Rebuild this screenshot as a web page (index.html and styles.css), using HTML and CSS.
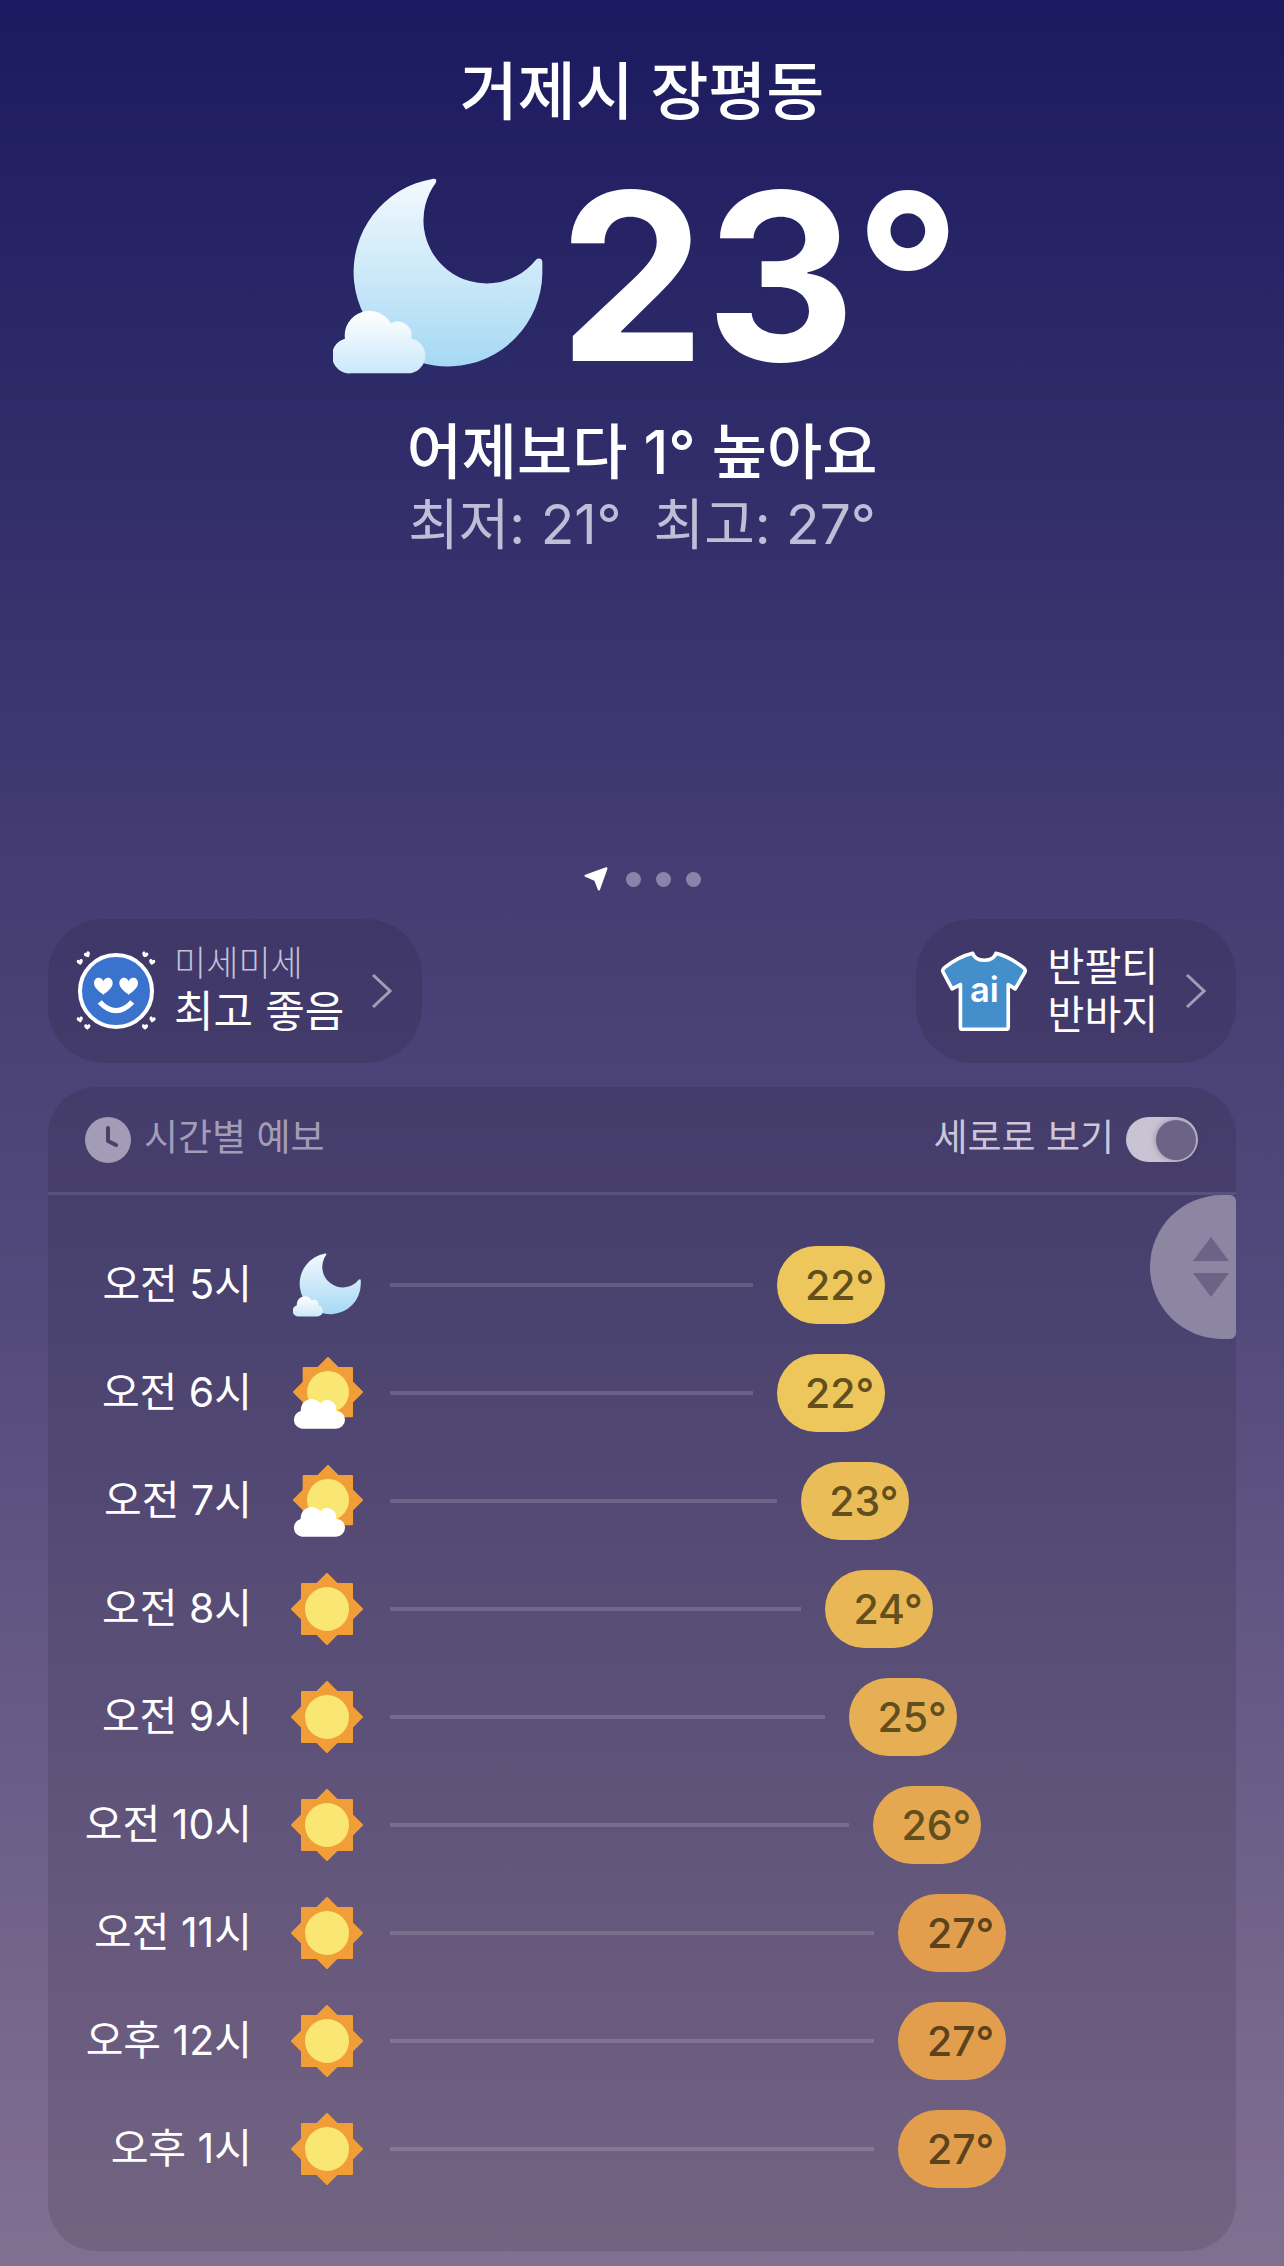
FILE: index.html
```html
<!DOCTYPE html>
<html lang="ko">
<head>
<meta charset="utf-8">
<meta name="viewport" content="width=device-width, initial-scale=1">
<title>거제시 장평동 날씨</title>
<link rel="stylesheet" href="styles.css">
</head>
<body>
<svg class="defs" aria-hidden="true">
  <defs>
    <linearGradient id="moonFill" x1="0" y1="0" x2="0" y2="1"><stop offset="0" stop-color="#f3f9fe"/><stop offset="1" stop-color="#a6d9f4"/></linearGradient>
    <linearGradient id="cloudFill" x1="0" y1="0" x2="0" y2="1"><stop offset="0" stop-color="#ffffff"/><stop offset="1" stop-color="#cbe8fa"/></linearGradient>
    <symbol id="moon" viewBox="98 87 632 588">
      <path fill="url(#moonFill)" d="M397 89C407 86 412 92 407 101A190 190 0 0 0 707 334C715 325 727 328 728 338V374A284 284 0 1 1 397 89Z"/>
      <path fill="url(#cloudFill)" d="M152 674A53 53 0 0 1 134 570A74 74 0 0 1 272 524A41 41 0 0 1 333 569A53 53 0 0 1 322 674Z"/>
    </symbol>
    <symbol id="sun" viewBox="0 0 72 72">
      <g fill="#f19e38" stroke="#f19e38" stroke-width="2" stroke-linejoin="round"><path d="M11 11H61V61H11Z"/><path d="M36 1L71 36L36 71L1 36Z"/></g>
      <circle cx="36" cy="36" r="22" fill="#fae673"/>
    </symbol>
    <symbol id="suncloud" viewBox="99 78 210 216">
      <g fill="#f19e38" stroke="#f19e38" stroke-width="6" stroke-linejoin="round"><path d="M131 111H276V256H131Z"/><path d="M204 81L306 183L204 285L102 183Z"/></g>
      <circle cx="204" cy="183" r="63" fill="#fae673"/>
      <path fill="#fff" d="M126 293A27 27 0 0 1 122 240A33 33 0 0 1 181 217A27 27 0 0 1 228 239A27 27 0 0 1 228 293Z"/>
    </symbol>
    <symbol id="chevron" viewBox="0 0 20 34"><path d="M1 1L18 17L1 33" fill="none" stroke="#a19cb8" stroke-width="3"/></symbol>
    <path id="heart" d="M0 26C-10 18 -28 7 -28 -8C-28 -28 -5 -30 0 -14C5 -30 28 -28 28 -8C28 7 10 18 0 26Z"/>
  </defs>
</svg>

<main class="app">
  <header class="hero">
    <h1 class="place">거제시 장평동</h1>
    <div class="now">
      <svg class="now-icon" role="img" aria-label="구름 조금, 밤"><use href="#moon"/></svg>
      <span class="now-temp">23°</span>
    </div>
    <p class="compare">어제보다 1° 높아요</p>
    <p class="range"><span>최저: 21°</span><span>최고: 27°</span></p>
  </header>

  <nav class="pager" aria-label="지역">
    <svg class="pager-here" viewBox="47 53 72 74" aria-hidden="true"><path d="M115 57L92 122L81 93L51 80Z" fill="#fff" stroke="#fff" stroke-width="7" stroke-linejoin="round"/></svg>
    <a class="dot" href="#1" aria-label="지역 1"></a>
    <a class="dot" href="#2" aria-label="지역 2"></a>
    <a class="dot" href="#3" aria-label="지역 3"></a>
  </nav>

  <div class="cards">
    <button class="card" type="button">
      <svg class="card-face" viewBox="111 300 240 240" aria-hidden="true">
        <circle cx="231" cy="420" r="108" fill="#3973ce" stroke="#fff" stroke-width="12"/>
        <g fill="#fff">
          <use href="#heart" transform="translate(193 405)"/><use href="#heart" transform="translate(269 405)"/>
          <use href="#heart" transform="translate(123 333) rotate(-14) scale(.33)"/><use href="#heart" transform="translate(145 311) rotate(-30) scale(.33)"/>
          <use href="#heart" transform="translate(318 311) rotate(20) scale(.33)"/><use href="#heart" transform="translate(339 333) rotate(14) scale(.33)"/>
          <use href="#heart" transform="translate(123 506) rotate(-14) scale(.33)"/><use href="#heart" transform="translate(145 528) scale(.33)"/>
          <use href="#heart" transform="translate(318 528) scale(.33)"/><use href="#heart" transform="translate(340 506) rotate(14) scale(.33)"/>
        </g>
        <path d="M182 453Q231 505 280 453" fill="none" stroke="#fff" stroke-width="16"/>
      </svg>
      <span class="card-text card-air"><span class="card-label">미세미세</span><span class="card-value">최고 좋음</span></span>
      <svg class="chevron" aria-hidden="true"><use href="#chevron"/></svg>
    </button>
    <button class="card card-wear" type="button">
      <svg class="card-shirt" viewBox="180 299 262 241" aria-hidden="true">
        <path d="M277 306C247 313 218 329 192 349Q184 355 188 363L215 413L240 400V529Q240 535 246 535H378Q384 535 384 529V400L405 413L434 363Q438 355 430 349C404 329 376 313 347 306C339 334 285 334 277 306Z" fill="#438ecb" stroke="#fff" stroke-width="11" stroke-linejoin="round"/>
        <text class="shirt-text" x="312" y="453" text-anchor="middle">ai</text>
      </svg>
      <span class="card-text"><span class="card-wear-line">반팔티</span><span class="card-wear-line">반바지</span></span>
      <svg class="chevron" aria-hidden="true"><use href="#chevron"/></svg>
    </button>
  </div>

  <section class="panel" aria-labelledby="hourly-title">
    <div class="panel-head">
      <svg class="clock" viewBox="0 0 46 46" aria-hidden="true"><circle cx="23" cy="23" r="23" fill="#a29cb6"/><path d="M23 11V24L31 28" fill="none" stroke="#494168" stroke-width="4" stroke-linecap="round" stroke-linejoin="round"/></svg>
      <h2 class="panel-title" id="hourly-title">시간별 예보</h2>
      <label class="switch-label" for="vertical">세로로 보기</label>
      <input class="switch" id="vertical" type="checkbox" role="switch" checked>
    </div>
    <div class="panel-body">
      <button class="handle" type="button" aria-label="스크롤">
        <svg class="handle-icon" viewBox="0 0 36 60" aria-hidden="true"><path d="M18 0L36 24H0ZM0 36H36L18 60Z" fill="#6b6487"/></svg>
      </button>
      <ol class="hours">
        <li class="hour"><span class="hour-time">오전 5시</span><svg class="hour-icon"><use href="#moon" x="2" y="4" width="68" height="64"/></svg><span class="track"><span class="bar" style="width:45%"></span><span class="pill t22">22°</span></span></li>
        <li class="hour"><span class="hour-time">오전 6시</span><svg class="hour-icon"><use href="#suncloud" x="1" width="72" height="72"/></svg><span class="track"><span class="bar" style="width:45%"></span><span class="pill t22">22°</span></span></li>
        <li class="hour"><span class="hour-time">오전 7시</span><svg class="hour-icon"><use href="#suncloud" x="1" width="72" height="72"/></svg><span class="track"><span class="bar" style="width:48%"></span><span class="pill t23">23°</span></span></li>
        <li class="hour"><span class="hour-time">오전 8시</span><svg class="hour-icon"><use href="#sun"/></svg><span class="track"><span class="bar" style="width:51%"></span><span class="pill t24">24°</span></span></li>
        <li class="hour"><span class="hour-time">오전 9시</span><svg class="hour-icon"><use href="#sun"/></svg><span class="track"><span class="bar" style="width:54%"></span><span class="pill t25">25°</span></span></li>
        <li class="hour"><span class="hour-time">오전 10시</span><svg class="hour-icon"><use href="#sun"/></svg><span class="track"><span class="bar" style="width:57%"></span><span class="pill t26">26°</span></span></li>
        <li class="hour"><span class="hour-time">오전 11시</span><svg class="hour-icon"><use href="#sun"/></svg><span class="track"><span class="bar" style="width:60%"></span><span class="pill t27">27°</span></span></li>
        <li class="hour"><span class="hour-time">오후 12시</span><svg class="hour-icon"><use href="#sun"/></svg><span class="track"><span class="bar" style="width:60%"></span><span class="pill t27">27°</span></span></li>
        <li class="hour"><span class="hour-time">오후 1시</span><svg class="hour-icon"><use href="#sun"/></svg><span class="track"><span class="bar" style="width:60%"></span><span class="pill t27">27°</span></span></li>
      </ol>
    </div>
  </section>
</main>
</body>
</html>
```
FILE: styles.css
```css
* { box-sizing: border-box; }

body {
  margin: 0;
  min-height: 100vh;
  color: #fff;
  font-family: Inter, "Noto Sans CJK KR", sans-serif;
  background: linear-gradient(#1c1a60 0%, #2e2b69 18%, #443c72 38%, #534a7c 58%, #7a698f 92%, #807090 100%);
}

h1, h2, p, ol { margin: 0; padding: 0; font-weight: 400; }
button { border: 0; color: inherit; font: inherit; cursor: pointer; }
svg { display: block; flex: none; }
.defs { position: absolute; width: 0; height: 0; }

.app { padding: 51px 48px 16px; }

/* Current conditions */
.hero { text-align: center; }
.place { font-size: 63px; line-height: 80px; font-weight: 500; }
.now { display: flex; justify-content: center; align-items: center; gap: 16px; height: 200px; margin-top: 45px; padding-left: 10px; }
.now-icon { width: 210px; height: 196px; }
.now-temp { font-size: 233px; line-height: 200px; font-weight: 700; }
.compare { margin-top: 40px; font-size: 60px; line-height: 72px; font-weight: 500; }
.range { display: flex; justify-content: center; gap: 32px; font-size: 55px; line-height: 72px; color: #c0bed7; }

/* Location pager */
.pager { display: flex; justify-content: center; align-items: center; gap: 15px; height: 24px; margin-top: 307px; }
.pager-here { width: 24px; height: 24px; margin-right: 3px; }
.dot { width: 15px; height: 15px; border-radius: 50%; background: #8b84aa; }

/* Shortcut cards */
.cards { display: flex; justify-content: space-between; margin-top: 28px; }
.card { display: flex; align-items: center; height: 144px; padding: 0 30px 0 28px; border-radius: 56px; background: rgba(0, 0, 0, .1); text-align: left; }
.card-wear { padding-left: 24px; }
.card-face { width: 80px; height: 80px; margin-right: 18px; }
.card-shirt { width: 88px; height: 80px; margin-right: 20px; }
.card-text { display: flex; flex-direction: column; margin-right: 28px; }
.card-air { padding-bottom: 8px; }
.card-label { font-size: 35px; line-height: 48px; font-weight: 300; color: #c5c1d5; }
.card-value { font-size: 43px; line-height: 48px; }
.card-wear-line { font-size: 40px; line-height: 48px; }
.chevron { width: 20px; height: 34px; }
.shirt-text { font-size: 104px; font-weight: 600; fill: #fff; }

/* Hourly forecast */
.panel { margin-top: 24px; border-radius: 48px; background: rgba(0, 0, 0, .1); }
.panel-head { display: flex; align-items: center; height: 108px; padding: 0 38px 0 37px; border-bottom: 3px solid rgba(255, 255, 255, .1); }
.clock { width: 46px; height: 46px; }
.panel-title { flex: 1; margin-left: 13px; padding-bottom: 4px; font-size: 37px; line-height: 48px; color: #a29cb6; }
.switch-label { padding-bottom: 4px; font-size: 37px; line-height: 48px; color: #cbc6da; }
.switch { appearance: none; display: flex; align-items: center; width: 72px; height: 45px; margin: 0 0 0 12px; padding: 2px; border-radius: 24px; background: #c8c4d3; cursor: pointer; }
.switch::before { content: ""; width: 40px; height: 40px; border-radius: 50%; background: #6b6487; box-shadow: 0 0 6px rgba(60, 50, 90, .4); }
.switch:checked { justify-content: flex-end; }

.panel-body { position: relative; padding: 36px 40px 48px 0; }
.handle { position: absolute; top: 0; right: 0; display: flex; justify-content: flex-end; align-items: center; width: 86px; height: 144px; padding: 0 7px 0 0; border-radius: 72px 6px 6px 72px; background: #8d86a2; }
.handle-icon { width: 36px; height: 60px; }

.hours { list-style: none; }
.hour { display: flex; align-items: center; height: 108px; }
.hour-time { width: 204px; margin-right: 39px; padding-bottom: 2px; font-size: 41px; line-height: 48px; text-align: right; white-space: nowrap; }
.hour-icon { width: 72px; height: 72px; margin-right: 27px; overflow: visible; }
.track { flex: 1; display: flex; align-items: center; gap: 24px; }
.bar { flex: none; height: 4px; background: rgba(255, 255, 255, .15); }
.pill { flex: none; width: 108px; height: 78px; padding-left: 18px; border-radius: 39px; font-size: 41px; line-height: 78px; font-weight: 500; text-align: center; color: #634f1d; }
.t22 { background: #eec75c; }
.t23 { background: #eabd58; }
.t24 { background: #e9b755; }
.t25 { background: #e7af53; }
.t26 { background: #e5a750; }
.t27 { background: #e29e4c; color: #5c431d; }
```
